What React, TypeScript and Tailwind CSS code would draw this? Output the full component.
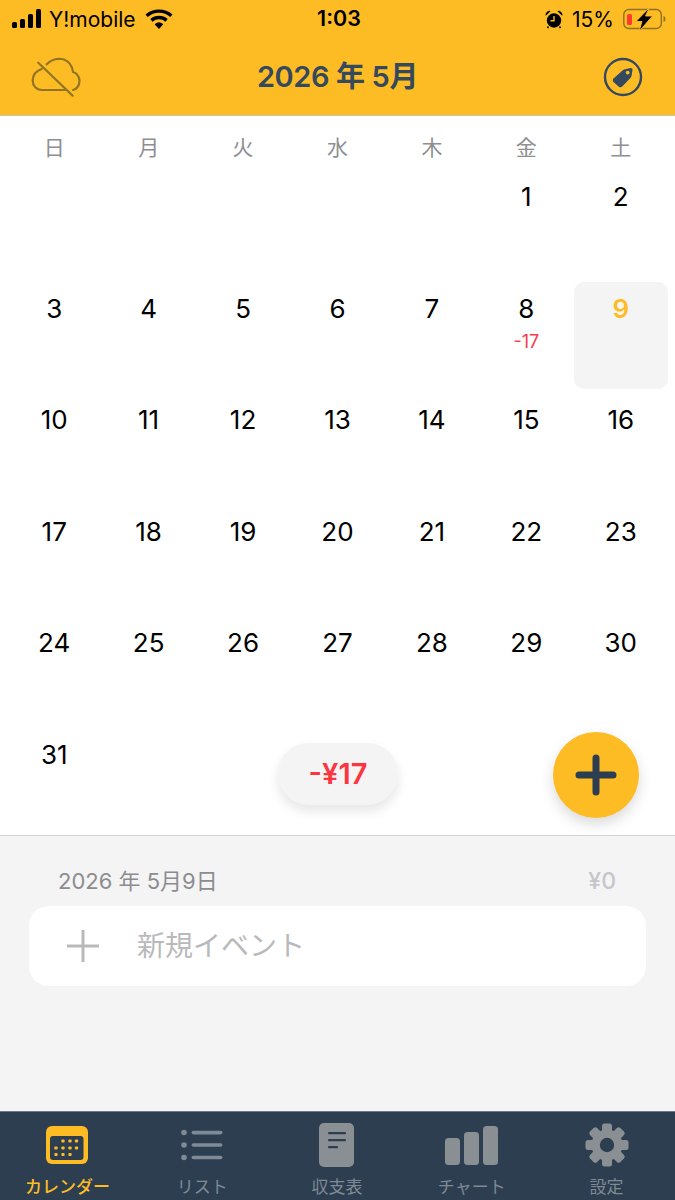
import React from "react";

const jp = '"Inter","Noto Sans CJK JP",sans-serif';
const days = ["日", "月", "火", "水", "木", "金", "土"];
const cells: (number | null)[] = [
  null, null, null, null, null, 1, 2,
  ...Array.from({ length: 29 }, (_, i) => i + 3),
];

function Signal() {
  return (
    <svg width="30" height="20" viewBox="0 0 30 20" fill="#000">
      <rect x="1" y="13" width="5" height="6" rx="1.5" />
      <rect x="9" y="10" width="5" height="9" rx="1.5" />
      <rect x="17" y="5" width="5" height="14" rx="1.5" />
      <rect x="25" y="0" width="5" height="19" rx="1.5" />
    </svg>
  );
}
function Wifi() {
  return (
    <svg width="28" height="20" viewBox="0 0 28 20" fill="none" stroke="#000" strokeWidth="3.4">
      <path d="M1.6 6.8C8.6 0.6 19.4 0.6 26.4 6.8" />
      <path d="M6.4 11.4C10.8 7.6 17.2 7.6 21.6 11.4" />
      <path d="M10.8 15.4L14 18.8L17.2 15.4C15.3 13.8 12.7 13.8 10.8 15.4Z" fill="#000" strokeWidth="1.5" />
    </svg>
  );
}
function Alarm() {
  return (
    <svg width="18" height="19" viewBox="0 0 18 19">
      <circle cx="9" cy="10.5" r="7.2" fill="#000" />
      <path d="M1 5.2C1 2.6 3 1 5 1.2ZM17 5.2C17 2.6 15 1 13 1.2Z" fill="#000" stroke="#000" />
      <path d="M9 6V10.8H5.5" fill="none" stroke="#fdbc24" strokeWidth="1.4" />
      <path d="M3.5 16.5L2.5 18M14.5 16.5L15.5 18" stroke="#000" strokeWidth="1.5" />
    </svg>
  );
}
function Battery() {
  return (
    <svg width="44" height="22" viewBox="0 0 44 22" fill="none">
      <rect x="0.8" y="1.5" width="37.5" height="19" rx="5" stroke="#8e7220" strokeWidth="1.4" />
      <path d="M40.5 8V14C42 13.6 42.4 12.4 42.4 11C42.4 9.6 42 8.4 40.5 8Z" fill="#8e7220" />
      <rect x="4" y="6" width="5" height="11" rx="1.6" fill="#ff3b30" />
      <path d="M13 13.5H19L16 23.5L29.5 8H22.5L26.5 -0.5Z" fill="#000" stroke="#fdbc24" strokeWidth="0.9" />
    </svg>
  );
}
function CloudOff() {
  return (
    <svg width="50" height="40" viewBox="0 0 50 40" fill="none" stroke="#917424" strokeWidth="2.2" strokeLinecap="round" strokeLinejoin="round">
      <path d="M10.7 12C5 14 1.7 18.5 1.7 23.5C1.7 29 5.5 33 10.7 33H34" />
      <path d="M15.7 7.3C19 3.5 25 1.2 30.5 2C37.5 3 41.5 9 42 15C46 16 48.5 20 48.5 24C48.5 28.5 45.5 32.5 42 33" />
      <path d="M7.3 5.7L41.7 38.7" />
    </svg>
  );
}
function TagIcon() {
  return (
    <svg width="40" height="40" viewBox="0 0 40 40">
      <circle cx="20" cy="20" r="18" fill="none" stroke="#34495e" strokeWidth="2.4" />
      <path d="M10.5 21.5L19.5 13.4C20.2 12.8 21 12.4 21.9 12.2L27.6 11C28.8 10.8 29.7 11.7 29.5 12.9L28.6 18.6C28.5 19.5 28.1 20.3 27.4 21L19.2 29.6C18.2 30.6 16.8 30.6 15.8 29.7L10.5 25C9.5 24 9.5 22.5 10.5 21.5Z" fill="#34495e" />
      <circle cx="24.7" cy="15.6" r="1.9" fill="#fdbc24" />
    </svg>
  );
}
function CalendarTab() {
  return (
    <svg width="42" height="38" viewBox="0 0 42 38">
      <rect x="0" y="0" width="42" height="38" rx="6" fill="#fdbc24" />
      <rect x="4" y="10" width="33.5" height="24" rx="3" fill="#2c3e50" />
      {[
        [17, 15], [24, 15], [30.5, 15],
        [10, 22], [17, 22], [24, 22], [30.5, 22],
        [10, 28.5], [17, 28.5], [24, 28.5],
      ].map(([x, y], i) => (
        <rect key={i} x={x - 1.6} y={y - 1.6} width="3.2" height="3.2" rx="0.8" fill="#fdbc24" />
      ))}
    </svg>
  );
}
function ListTab() {
  return (
    <svg width="42" height="32" viewBox="0 0 42 32" fill="#7f8a96">
      <circle cx="3" cy="3.5" r="2.8" /><rect x="10.5" y="1.8" width="31" height="3.6" rx="1.8" />
      <circle cx="3" cy="16" r="2.8" /><rect x="10.5" y="14.2" width="31" height="3.6" rx="1.8" />
      <circle cx="3" cy="28.5" r="2.8" /><rect x="10.5" y="26.7" width="31" height="3.6" rx="1.8" />
    </svg>
  );
}
function ReportTab() {
  return (
    <svg width="35" height="44" viewBox="0 0 35 44">
      <rect width="35" height="44" rx="5" fill="#8a8f94" />
      <rect x="9" y="9" width="18" height="2.2" rx="1" fill="#2c3e50" />
      <rect x="9" y="16" width="18" height="2.2" rx="1" fill="#2c3e50" />
      <rect x="9" y="23" width="10" height="2.2" rx="1" fill="#2c3e50" />
    </svg>
  );
}
function ChartTab() {
  return (
    <svg width="53" height="39" viewBox="0 0 53 39" fill="#8a8f94">
      <rect x="0" y="12" width="15" height="27" rx="3.5" />
      <rect x="19" y="6" width="15" height="33" rx="3.5" />
      <rect x="38" y="0" width="15" height="39" rx="3.5" />
    </svg>
  );
}
function GearTab() {
  return (
    <svg width="44" height="44" viewBox="0 0 44 44">
      {[0, 45, 90, 135, 180, 225, 270, 315].map((a) => (
        <rect key={a} x="17" y="0.5" width="10" height="10" rx="2.5" fill="#8a8f94" transform={`rotate(${a} 22 22)`} />
      ))}
      <circle cx="22" cy="22" r="15.5" fill="#8a8f94" />
      <circle cx="22" cy="22" r="7.2" fill="#2c3e50" />
    </svg>
  );
}

const tabs = [
  { label: "カレンダー", icon: <CalendarTab />, on: true },
  { label: "リスト", icon: <ListTab />, on: false },
  { label: "収支表", icon: <ReportTab />, on: false },
  { label: "チャート", icon: <ChartTab />, on: false },
  { label: "設定", icon: <GearTab />, on: false },
];

export default function App() {
  return (
    <div className="relative flex h-[1200px] w-[675px] flex-col overflow-hidden bg-white" style={{ fontFamily: jp }}>
      <header className="h-[116px] shrink-0 border-b border-[#c9c4b4] bg-[#fdbc24]">
        <div className="grid h-[38px] grid-cols-3 items-center pl-[11px] pr-[8px] text-black">
          <div className="flex items-center">
            <Signal />
            <span className="ml-[8px] text-[21px] leading-none">Y!mobile</span>
            <span className="ml-[9px]"><Wifi /></span>
          </div>
          <div className="text-center text-[21.5px] font-semibold leading-none">1:03</div>
          <div className="flex items-center justify-end">
            <Alarm />
            <span className="ml-[9px] text-[21px] leading-none">15%</span>
            <span className="ml-[9px]"><Battery /></span>
          </div>
        </div>
        <div className="flex h-[77px] items-center justify-between pl-[31px] pr-[32px]">
          <CloudOff />
          <div className="ml-[-9px] text-[29px] font-semibold tracking-[-0.4px] text-[#34495e]">2026 年 5月</div>
          <TagIcon />
        </div>
      </header>

      <main className="h-[719px] shrink-0 px-[7px]">
        <div className="grid h-[54px] grid-cols-7 items-center pt-[8px]">
          {days.map((d) => (
            <div key={d} className="text-center text-[21px] leading-none text-[#8e8e93]">{d}</div>
          ))}
        </div>
        <div className="grid grid-cols-7 auto-rows-[111.5px]">
          {cells.map((n, i) => (
            <div key={i} className={`flex h-[107px] flex-col items-center rounded-[10px] pt-[10px] ${n === 9 ? "bg-[#f4f4f5]" : ""}`}>
              {n !== null && (
                <>
                  <span className={`text-[26px] leading-[34px] ${n === 9 ? "font-semibold text-[#fdbc24]" : "text-black"}`}>{n}</span>
                  {n === 8 && <span className="mt-[6px] text-[18px] leading-[20px] text-[#fb3b4c]">-17</span>}
                </>
              )}
            </div>
          ))}
        </div>
      </main>

      <section className="flex-1 border-t border-[#d4d4d6] bg-[#f4f4f5] px-[29px] pt-[28px]">
        <div className="flex items-center justify-between pl-[29px] pr-[30px] text-[22px] leading-[34px]">
          <span className="text-[#8c8c90]">2026 年 5月9日</span>
          <span className="text-[23px] font-medium text-[#c6c6ca]">¥0</span>
        </div>
        <div className="mt-[8px] flex h-[80px] items-center rounded-[20px] bg-white pl-[37px]">
          <svg width="34" height="34" viewBox="0 0 34 34" stroke="#b9b9bb" strokeWidth="3">
            <path d="M17 1V33M1 17H33" />
          </svg>
          <span className="ml-[37px] text-[28px] leading-none text-[#b9b9bb]">新規イベント</span>
        </div>
      </section>

      <nav className="grid h-[89px] shrink-0 grid-cols-5 border-t border-[#6d7c8a] bg-[#2c3e50] pr-[1px]">
        {tabs.map((t) => (
          <div key={t.label} className="relative flex flex-col items-center">
            <div className="flex h-[66px] items-center justify-center">{t.icon}</div>
            <span className={`absolute bottom-[2px] whitespace-nowrap text-[17px] leading-[22px] ${t.on ? "font-medium text-[#fdbc24]" : "text-[#7f8a96]"}`}>{t.label}</span>
          </div>
        ))}
      </nav>

      <div className="absolute left-[278px] top-[743px] flex h-[62px] w-[120px] items-center justify-center rounded-full bg-[#f4f4f5] text-[29px] font-semibold text-[#fb3640] shadow-[0_6px_12px_rgba(0,0,0,0.1)]">
        -¥17
      </div>
      <div className="absolute left-[553px] top-[732px] flex h-[86px] w-[86px] items-center justify-center rounded-full bg-[#fdbc24] shadow-[0_6px_14px_rgba(0,0,0,0.15)]">
        <svg width="42" height="42" viewBox="0 0 42 42" stroke="#2c3e50" strokeWidth="7" strokeLinecap="round">
          <path d="M21 4V38M4 21H38" />
        </svg>
      </div>
    </div>
  );
}
